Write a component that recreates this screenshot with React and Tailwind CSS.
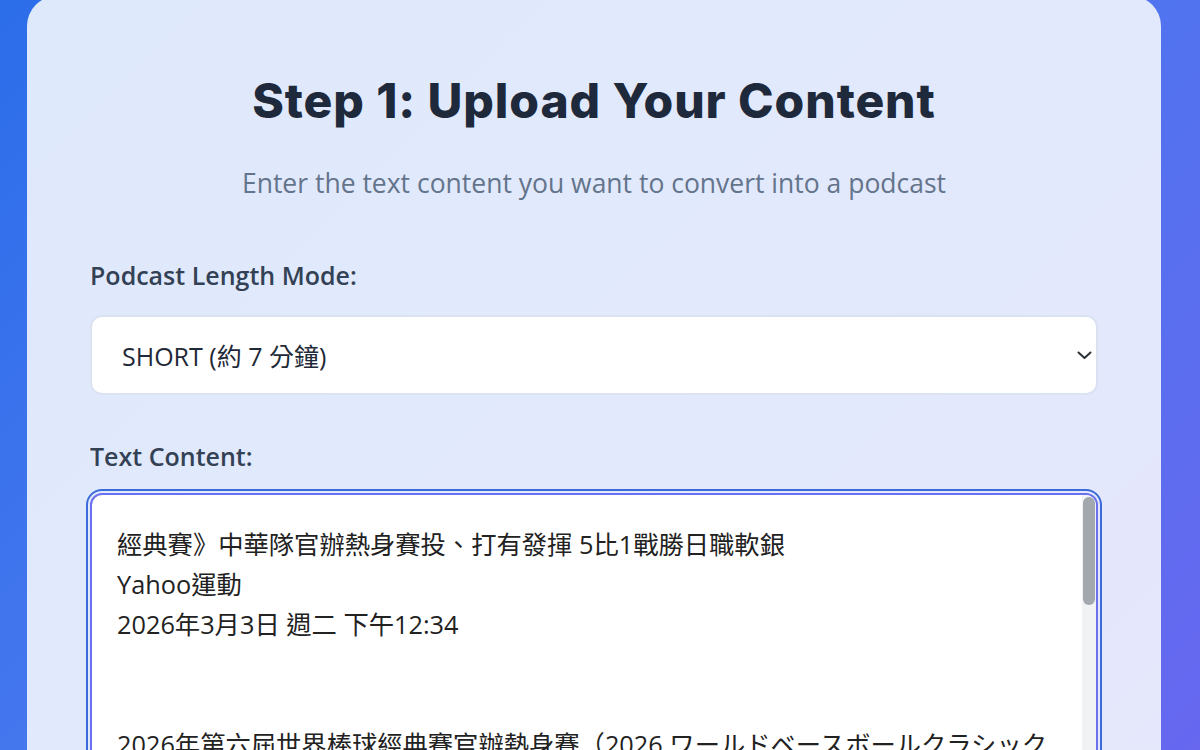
import { useState } from "react";

const ARTICLE = `經典賽》中華隊官辦熱身賽投、打有發揮 5比1戰勝日職軟銀
Yahoo運動
2026年3月3日 週二 下午12:34


2026年第六屆世界棒球經典賽官辦熱身賽（2026 ワールドベースボールクラシック 強化試合）今天在日本福岡巨蛋登場，中華隊迎戰日職福岡軟銀鷹，投手群接力壓制對手打線，打線也適時發揮，終場以5比1擊敗軟銀，為即將展開的經典賽預賽暖身。

中華隊今天由古林睿煬先發，主投3局僅被擊出1支安打，送出4次三振，沒有失分，展現出穩定的控球與壓制力。後援投手群也表現亮眼，接力封鎖軟銀打線，僅在第7局掉1分。

攻擊方面，中華隊在第2局就靠著連續安打先馳得點，第5局再靠長打擴大領先，第8局又補上2分保險分，全場共敲出9支安打。

總教練曾豪駒賽後表示，球員狀況逐漸調整到最佳，投手群的表現令人放心，打線也越來越有手感，希望在正式比賽中延續好表現。

中華隊將在明天進行第二場官辦熱身賽，隨後移師東京巨蛋，準備迎接經典賽預賽的挑戰。`;

function Chevron() {
  return (
    <svg
      className="pointer-events-none absolute right-[5px] top-1/2 -translate-y-1/2"
      width="17"
      height="12"
      viewBox="0 0 17 12"
      fill="none"
    >
      <path d="M2.5 3.5 8.5 9 14.5 3.5" stroke="#2b2f36" strokeWidth="2" strokeLinecap="round" strokeLinejoin="round" />
    </svg>
  );
}

export default function App() {
  const [mode, setMode] = useState("short");
  const [text, setText] = useState(ARTICLE);

  return (
    <div
      className="h-[750px] w-[1200px] overflow-hidden bg-[linear-gradient(135deg,#2c6de9_0%,#4878ef_45%,#6767f0_100%)]"
      style={{ fontFamily: '"Open Sans", "Noto Sans CJK TC", sans-serif' }}
    >
      <div className="ml-[27px] -mt-[4px] w-[1134px] rounded-[30px] bg-[linear-gradient(135deg,#dfe9fc_0%,#e2e9fc_50%,#e6e6fb_100%)] px-[63px] pt-[76px] pb-16">
        <h1
          className="text-center text-[48px] leading-[58px] font-extrabold tracking-[0.9px] text-[#1e293b]"
          style={{ fontFamily: 'Inter, "Noto Sans", sans-serif' }}
        >
          Step 1: Upload Your Content
        </h1>
        <p className="mt-[34px] text-center text-[26.5px] leading-[39px] text-[#64748b]">
          Enter the text content you want to convert into a podcast
        </p>

        <label className="mt-[54px] block text-[25px] leading-[36px] font-semibold text-[#334155]">
          Podcast Length Mode:
        </label>
        <div className="relative mt-[22px]">
          <select
            value={mode}
            onChange={(e) => setMode(e.target.value)}
            className="block h-[80px] w-full appearance-none rounded-[12px] border-2 border-[#dbe3f3] bg-white px-[30px] pt-[3px] text-[25px] text-[#1f2937] outline-none"
          >
            <option value="short">SHORT (約 7 分鐘)</option>
            <option value="medium">MEDIUM (約 15 分鐘)</option>
            <option value="long">LONG (約 25 分鐘)</option>
          </select>
          <Chevron />
        </div>

        <label className="mt-[43px] block text-[25px] leading-[36px] font-semibold text-[#334155]">
          Text Content:
        </label>
        <div className="mt-[19px] flex h-[420px] overflow-hidden rounded-[12px] border-2 border-[#6b70ee] bg-white outline-2 outline-offset-2 outline-[#3a6bd9]">
          <textarea
            value={text}
            onChange={(e) => setText(e.target.value)}
            className="block flex-1 resize-none overflow-hidden bg-transparent pt-[29px] pl-[25px] pr-[26px] text-[25.3px] leading-[40px] text-[#222] outline-none"
          />
          <div className="w-[14px] shrink-0 bg-[#f1f2f4] px-[1px] pt-[2px]">
            <div className="h-[108px] rounded-full bg-[#a3a7ae]" />
          </div>
        </div>
      </div>
    </div>
  );
}
